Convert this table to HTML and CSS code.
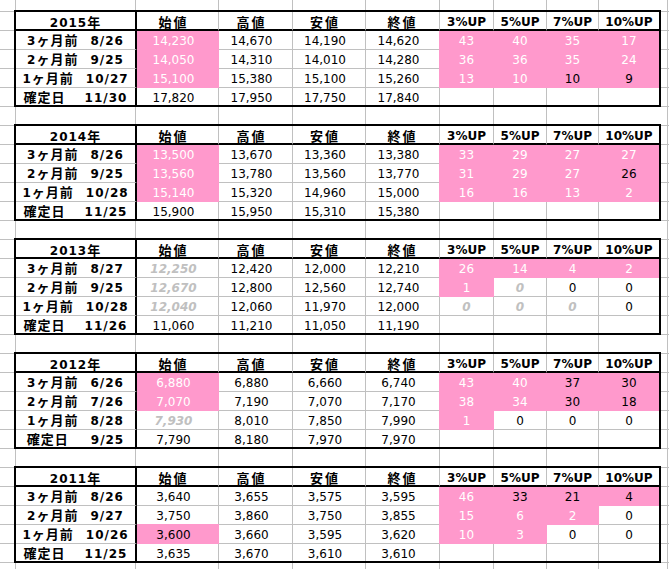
FILE: index.html
```html
<!DOCTYPE html>
<html lang="ja">
<head>
<meta charset="utf-8">
<title>株価 3%UP 集計</title>
<link rel="stylesheet" href="styles.css">
</head>
<body>
<div class="sheet">

  <div class="t">
    <div class="c">2015<span class="jp">年</span></div>
    <div class="c"><span class="jp jh">始値</span></div>
    <div class="c"><span class="jp jh">高値</span></div>
    <div class="c"><span class="jp jh">安値</span></div>
    <div class="c fin"><span class="jp jh">終値</span></div>
    <div class="c">3%UP</div><div class="c">5%UP</div><div class="c">7%UP</div><div class="c">10%UP</div>

    <div class="c">3<span class="jp">ヶ月前</span><span class="dt">8/26</span></div>
    <div class="c p">14,230</div><div class="c">14,670</div><div class="c">14,190</div><div class="c">14,620</div>
    <div class="c p">43</div><div class="c p">40</div><div class="c p">35</div><div class="c p">17</div>

    <div class="c">2<span class="jp">ヶ月前</span><span class="dt">9/25</span></div>
    <div class="c p">14,050</div><div class="c">14,310</div><div class="c">14,010</div><div class="c">14,280</div>
    <div class="c p">36</div><div class="c p">36</div><div class="c p">35</div><div class="c p">24</div>

    <div class="c">1<span class="jp">ヶ月前</span><span class="dt">10/27</span></div>
    <div class="c p">15,100</div><div class="c">15,380</div><div class="c">15,100</div><div class="c">15,260</div>
    <div class="c p">13</div><div class="c p">10</div><div class="c p k">10</div><div class="c p k">9</div>

    <div class="c"><span class="jp">確定日</span><span class="dt w">11/30</span></div>
    <div class="c">17,820</div><div class="c">17,950</div><div class="c">17,750</div><div class="c">17,840</div>
    <div class="c"></div><div class="c"></div><div class="c"></div><div class="c"></div>
  </div>

  <div class="t">
    <div class="c">2014<span class="jp">年</span></div>
    <div class="c"><span class="jp jh">始値</span></div>
    <div class="c"><span class="jp jh">高値</span></div>
    <div class="c"><span class="jp jh">安値</span></div>
    <div class="c fin"><span class="jp jh">終値</span></div>
    <div class="c">3%UP</div><div class="c">5%UP</div><div class="c">7%UP</div><div class="c">10%UP</div>

    <div class="c">3<span class="jp">ヶ月前</span><span class="dt">8/26</span></div>
    <div class="c p">13,500</div><div class="c">13,670</div><div class="c">13,360</div><div class="c">13,380</div>
    <div class="c p">33</div><div class="c p">29</div><div class="c p">27</div><div class="c p">27</div>

    <div class="c">2<span class="jp">ヶ月前</span><span class="dt">9/25</span></div>
    <div class="c p">13,560</div><div class="c">13,780</div><div class="c">13,560</div><div class="c">13,770</div>
    <div class="c p">31</div><div class="c p">29</div><div class="c p">27</div><div class="c p k">26</div>

    <div class="c">1<span class="jp">ヶ月前</span><span class="dt">10/28</span></div>
    <div class="c p">15,140</div><div class="c">15,320</div><div class="c">14,960</div><div class="c">15,000</div>
    <div class="c p">16</div><div class="c p">16</div><div class="c p">13</div><div class="c p">2</div>

    <div class="c"><span class="jp">確定日</span><span class="dt w">11/25</span></div>
    <div class="c">15,900</div><div class="c">15,950</div><div class="c">15,310</div><div class="c">15,380</div>
    <div class="c"></div><div class="c"></div><div class="c"></div><div class="c"></div>
  </div>

  <div class="t">
    <div class="c">2013<span class="jp">年</span></div>
    <div class="c"><span class="jp jh">始値</span></div>
    <div class="c"><span class="jp jh">高値</span></div>
    <div class="c"><span class="jp jh">安値</span></div>
    <div class="c fin"><span class="jp jh">終値</span></div>
    <div class="c">3%UP</div><div class="c">5%UP</div><div class="c">7%UP</div><div class="c">10%UP</div>

    <div class="c">3<span class="jp">ヶ月前</span><span class="dt">8/27</span></div>
    <div class="c g">12,250</div><div class="c">12,420</div><div class="c">12,000</div><div class="c">12,210</div>
    <div class="c p">26</div><div class="c p">14</div><div class="c p">4</div><div class="c p">2</div>

    <div class="c">2<span class="jp">ヶ月前</span><span class="dt">9/25</span></div>
    <div class="c g">12,670</div><div class="c">12,800</div><div class="c">12,560</div><div class="c">12,740</div>
    <div class="c p">1</div><div class="c g">0</div><div class="c">0</div><div class="c">0</div>

    <div class="c">1<span class="jp">ヶ月前</span><span class="dt">10/28</span></div>
    <div class="c g">12,040</div><div class="c">12,060</div><div class="c">11,970</div><div class="c">12,000</div>
    <div class="c g">0</div><div class="c g">0</div><div class="c g">0</div><div class="c">0</div>

    <div class="c"><span class="jp">確定日</span><span class="dt w">11/26</span></div>
    <div class="c">11,060</div><div class="c">11,210</div><div class="c">11,050</div><div class="c">11,190</div>
    <div class="c"></div><div class="c"></div><div class="c"></div><div class="c"></div>
  </div>

  <div class="t">
    <div class="c">2012<span class="jp">年</span></div>
    <div class="c"><span class="jp jh">始値</span></div>
    <div class="c"><span class="jp jh">高値</span></div>
    <div class="c"><span class="jp jh">安値</span></div>
    <div class="c fin"><span class="jp jh">終値</span></div>
    <div class="c">3%UP</div><div class="c">5%UP</div><div class="c">7%UP</div><div class="c">10%UP</div>

    <div class="c">3<span class="jp">ヶ月前</span><span class="dt">6/26</span></div>
    <div class="c p">6,880</div><div class="c">6,880</div><div class="c">6,660</div><div class="c">6,740</div>
    <div class="c p">43</div><div class="c p">40</div><div class="c p k">37</div><div class="c p k">30</div>

    <div class="c">2<span class="jp">ヶ月前</span><span class="dt">7/26</span></div>
    <div class="c p">7,070</div><div class="c">7,190</div><div class="c">7,070</div><div class="c">7,170</div>
    <div class="c p">38</div><div class="c p">34</div><div class="c p k">30</div><div class="c p k">18</div>

    <div class="c">1<span class="jp">ヶ月前</span><span class="dt">8/28</span></div>
    <div class="c g">7,930</div><div class="c">8,010</div><div class="c">7,850</div><div class="c">7,990</div>
    <div class="c p">1</div><div class="c">0</div><div class="c">0</div><div class="c">0</div>

    <div class="c"><span class="jp">確定日</span><span class="dt w2">9/25</span></div>
    <div class="c">7,790</div><div class="c">8,180</div><div class="c">7,970</div><div class="c">7,970</div>
    <div class="c"></div><div class="c"></div><div class="c"></div><div class="c"></div>
  </div>

  <div class="t">
    <div class="c">2011<span class="jp">年</span></div>
    <div class="c"><span class="jp jh">始値</span></div>
    <div class="c"><span class="jp jh">高値</span></div>
    <div class="c"><span class="jp jh">安値</span></div>
    <div class="c fin"><span class="jp jh">終値</span></div>
    <div class="c">3%UP</div><div class="c">5%UP</div><div class="c">7%UP</div><div class="c">10%UP</div>

    <div class="c">3<span class="jp">ヶ月前</span><span class="dt">8/26</span></div>
    <div class="c">3,640</div><div class="c">3,655</div><div class="c">3,575</div><div class="c">3,595</div>
    <div class="c p">46</div><div class="c p k">33</div><div class="c p k">21</div><div class="c p k">4</div>

    <div class="c">2<span class="jp">ヶ月前</span><span class="dt">9/27</span></div>
    <div class="c">3,750</div><div class="c">3,860</div><div class="c">3,750</div><div class="c">3,855</div>
    <div class="c p">15</div><div class="c p">6</div><div class="c p">2</div><div class="c">0</div>

    <div class="c">1<span class="jp">ヶ月前</span><span class="dt">10/26</span></div>
    <div class="c p k pt">3,600</div><div class="c">3,660</div><div class="c">3,595</div><div class="c">3,620</div>
    <div class="c p">10</div><div class="c p">3</div><div class="c">0</div><div class="c">0</div>

    <div class="c"><span class="jp">確定日</span><span class="dt w">11/25</span></div>
    <div class="c">3,635</div><div class="c">3,670</div><div class="c">3,610</div><div class="c">3,610</div>
    <div class="c"></div><div class="c"></div><div class="c"></div><div class="c"></div>
  </div>

</div>
</body>
</html>
```

FILE: styles.css
```css
html, body {
  margin: 0;
  padding: 0;
}

body {
  font-family: "DejaVu Sans", "Noto Sans CJK JP", sans-serif;
  font-size: 12px;
  color: #000;
  background: #fff;
}

/* worksheet with its grid lines */
.sheet {
  min-height: 100vh;
  box-sizing: border-box;
  padding: 10px 0 0 14px;
  display: flex;
  flex-direction: column;
  align-items: flex-start;
  gap: 17px;
  background-color: #fff;
  background-image:
    linear-gradient(#c0c0c0, #c0c0c0),
    linear-gradient(#c0c0c0, #c0c0c0),
    linear-gradient(#c0c0c0, #c0c0c0),
    linear-gradient(#c0c0c0, #c0c0c0),
    linear-gradient(#c0c0c0, #c0c0c0),
    linear-gradient(#c0c0c0, #c0c0c0),
    linear-gradient(#c0c0c0, #c0c0c0),
    linear-gradient(#c0c0c0, #c0c0c0),
    linear-gradient(#c0c0c0, #c0c0c0),
    linear-gradient(#c0c0c0, #c0c0c0),
    repeating-linear-gradient(to bottom, transparent 0 11px, #c0c0c0 11px 12px, transparent 12px 19px);
  background-size:
    1px 100%, 1px 100%, 1px 100%, 1px 100%, 1px 100%,
    1px 100%, 1px 100%, 1px 100%, 1px 100%, 1px 100%,
    100% 100%;
  background-position:
    15px 0, 135px 0, 218px 0, 292px 0, 365px 0,
    439px 0, 493px 0, 546px 0, 598px 0, 667px 0,
    0 0;
  background-repeat: no-repeat;
}

/* one block of the sheet */
.t {
  display: grid;
  grid-template-columns: 121px 82px 74px 73px 74px 54px 53px 52px 60px;
  grid-template-rows: 19px 19px 19px 19px 17px;
  border: 2px solid #000;
  background: #fff;
}

.c {
  box-sizing: border-box;
  border-right: 1px solid #c0c0c0;
  border-bottom: 1px solid #c0c0c0;
  padding-top: 3px;
  line-height: 15px;
  text-align: center;
  white-space: nowrap;
}

/* header row */
.t > .c:nth-child(-n+9) {
  border-bottom: 2px solid #000;
  padding-top: 4px;
  line-height: 13px;
  font-weight: bold;
}

/* label column */
.t > .c:nth-child(9n+1) {
  border-right: 2px solid #000;
  font-weight: bold;
  letter-spacing: 1px;
}

/* price columns: value sits a little left of centre */
.t > .c:nth-child(9n+2),
.t > .c:nth-child(9n+3),
.t > .c:nth-child(9n+4),
.t > .c:nth-child(9n+5) {
  padding-right: 8px;
}

.t > .c.fin {
  padding-right: 0;
}

/* last column and last row sit against the frame */
.t > .c:nth-child(9n) {
  border-right: 0;
}

.t > .c:nth-child(n+37) {
  border-bottom: 0;
}

.jp {
  font-family: "Noto Sans CJK JP", sans-serif;
  font-size: 13px;
  line-height: 12px;
  letter-spacing: 1px;
}

.jh {
  letter-spacing: 2px;
  vertical-align: 1px;
}

.dt {
  margin-left: 12px;
}

.dt.w {
  margin-left: 19px;
}

.dt.w2 {
  margin-left: 22px;
}

/* pink highlight */
.c.p {
  background: #ff99cc;
  color: #fff;
  border-color: #ff99cc;
}

.t > .c.p:nth-child(9n+6) {
  box-shadow: -1px 0 0 #ff99cc;
}

.c.p.pt {
  box-shadow: 0 -1px 0 #ff99cc;
}

.c.p.k {
  color: #000;
}

/* greyed-out value */
.c.g {
  color: #c0c0c0;
  font-style: italic;
  font-weight: bold;
}
```
